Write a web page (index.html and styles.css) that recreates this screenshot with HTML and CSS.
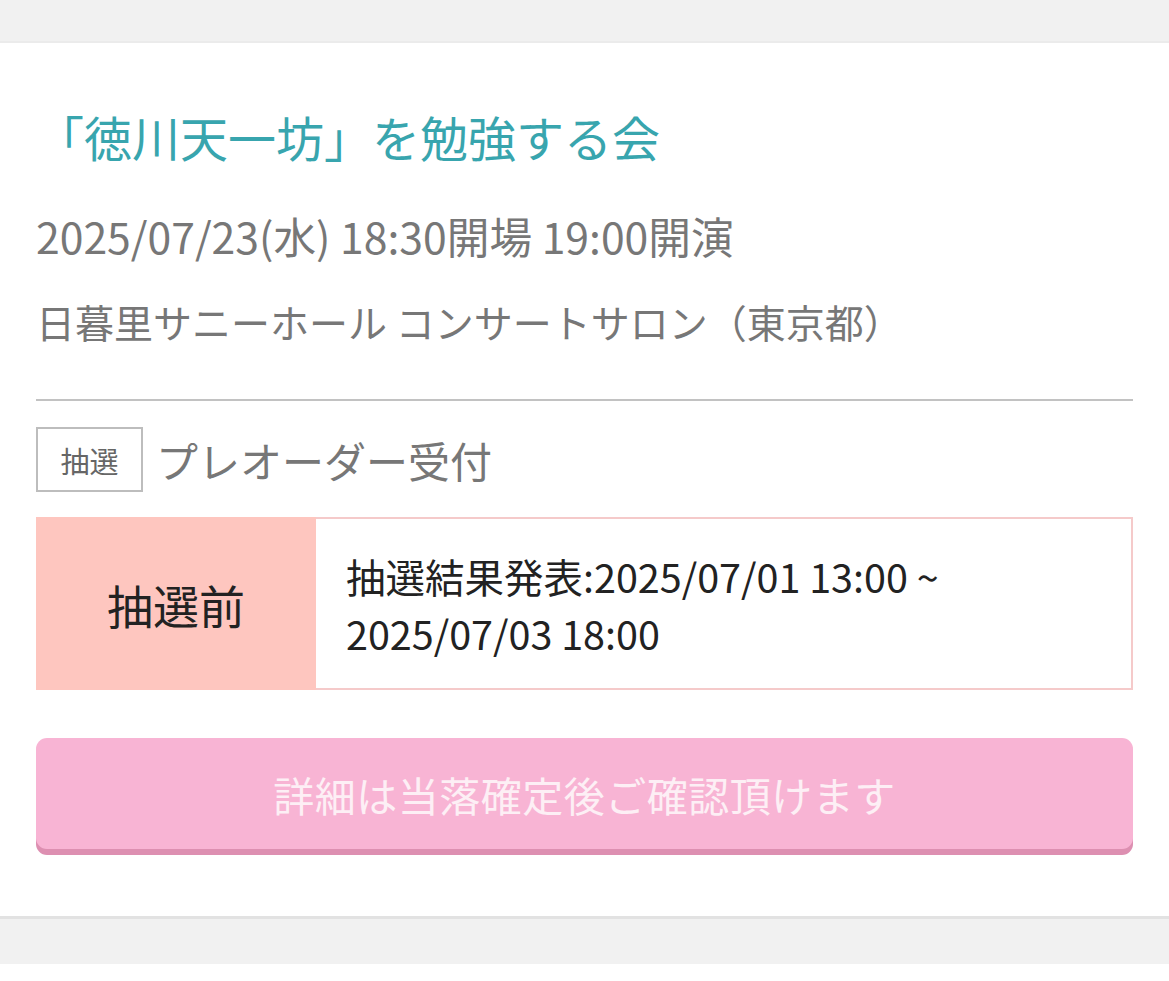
FILE: index.html
```html
<!DOCTYPE html>
<html lang="ja">
<head>
<meta charset="utf-8">
<link rel="stylesheet" href="styles.css">
</head>
<body>
<div class="top-band"></div>
<main class="card">
  <h1 class="title">「徳川天一坊」を勉強する会</h1>
  <p class="date">2025/07/23(水) 18:30開場 19:00開演</p>
  <p class="venue">日暮里サニーホール コンサートサロン（東京都）</p>
  <hr class="divider">
  <div class="sale">
    <span class="badge">抽選</span>
    <span class="sale-name">プレオーダー受付</span>
  </div>
  <div class="status">
    <div class="status-label">抽選前</div>
    <div class="status-text">抽選結果発表:2025/07/01 13:00 ~<br>2025/07/03 18:00</div>
  </div>
  <div class="button">詳細は当落確定後ご確認頂けます</div>
</main>
<div class="bottom-band"></div>
</body>
</html>
```
FILE: styles.css
```css
html, body {
  margin: 0;
  padding: 0;
  background: #ffffff;
  font-family: "Noto Sans CJK JP", "Noto Sans", sans-serif;
}
.top-band {
  height: 41px;
  background: #f1f1f1;
  border-bottom: 2px solid #ebebeb;
}
.card {
  background: #fff;
  padding: 63px 36px 67px 36px;
  display: flex;
  flex-direction: column;
  border-bottom: 3px solid #e2e2e2;
}
.title {
  margin: 0;
  font-size: 48px;
  font-weight: 400;
  color: #38a5ae;
  line-height: 60px;
}
.date {
  margin: 43px 0 0 0;
  font-size: 42.7px;
  color: #777;
  line-height: 52px;
}
.venue {
  margin: 35px 0 0 0;
  font-size: 39px;
  color: #777;
  line-height: 50px;
}
.divider {
  margin: 53px 0 0 0;
  border: 0;
  height: 2px;
  background: #c2c2c2;
}
.sale {
  margin-top: 26px;
  display: flex;
  align-items: center;
  gap: 13px;
}
.badge {
  box-sizing: border-box;
  width: 107px;
  height: 65px;
  border: 2px solid #bdbdbd;
  display: flex;
  align-items: center;
  justify-content: center;
  font-size: 29px;
  color: #666;
}
.sale-name {
  font-size: 42px;
  color: #777;
  line-height: 50px;
}
.status {
  margin-top: 25px;
  display: flex;
  height: 173px;
  box-sizing: border-box;
  border: 2px solid #f5caca;
}
.status-label {
  width: 280px;
  background: #fec6bf;
  display: flex;
  align-items: center;
  justify-content: center;
  font-size: 46px;
  color: #222;
  margin: -2px 0 -2px -2px;
}
.status-text {
  flex: 1;
  display: flex;
  align-items: center;
  padding-left: 30px;
  font-size: 39.5px;
  line-height: 57px;
  color: #222;
}
.button {
  margin-top: 48px;
  height: 111px;
  border-radius: 11px;
  background: #f8b4d4;
  box-shadow: 0 6px 0 #dd8fb1;
  display: flex;
  align-items: center;
  justify-content: center;
  font-size: 41px;
  color: #fdeff5;
  letter-spacing: 0.5px;
}
.bottom-band {
  height: 45px;
  background: #f1f1f1;
}
```
